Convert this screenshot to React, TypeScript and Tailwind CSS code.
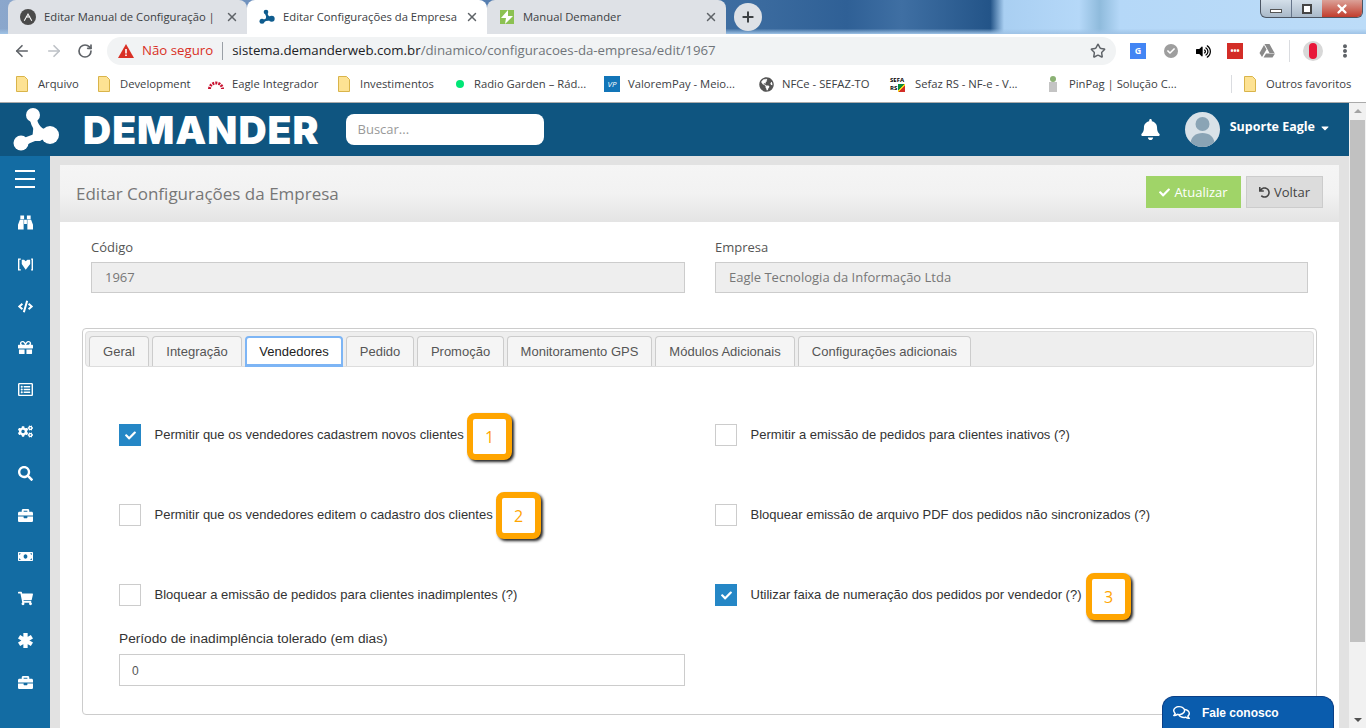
import { useState } from "react";
import {
  FaBell, FaBriefcase, FaCaretDown, FaCheck, FaCode, FaCogs, FaEllipsisV,
  FaGift, FaGlobeAmericas, FaMoneyBill, FaRegComments, FaRegListAlt, FaSearch, FaShoppingCart, FaUndo, FaVolumeUp,
} from "react-icons/fa";
import { ArrowLeft, ArrowRight, Plus, RotateCw, Star, X } from "lucide-react";

const DemanderMark = ({ className, color = "#fff" }: { className: string; color?: string }) => (
  <svg viewBox="0 0 48 46" className={className}>
    <path d="M21 9 C22 20 27 25 38 28 C28 28 20 30 9 37" fill="none" stroke={color} strokeWidth="7" />
    <path d="M22 14 L30 22 L38 28 L28 34 L20 34 Z" fill={color} />
    <circle cx="21" cy="8" r="7" fill={color} />
    <circle cx="38" cy="28" r="9" fill={color} />
    <circle cx="9" cy="36" r="7.5" fill={color} />
  </svg>
);

const Folder = () => (
  <svg viewBox="0 0 12 16" className="h-4 w-3 shrink-0">
    <path d="M.5.5h8l3 3v12H.5z" fill="#fde293" stroke="#d9b44a" />
  </svg>
);

const Tab = ({ title, icon, active, width }: { title: string; icon: React.ReactNode; active?: boolean; width: string }) => (
  <div className={`flex h-[34px] items-center gap-2 rounded-t-lg pl-3 pr-2 ${width} ${active ? "bg-white" : "bg-[#dee1e6]"}`}>
    <span className="flex h-4 w-4 shrink-0 items-center justify-center">{icon}</span>
    <span className="min-w-0 flex-1 whitespace-nowrap text-[11.25px] text-[#3c4043]">{title}</span>
    <X className="h-3.5 w-3.5 shrink-0 text-[#5f6368]" strokeWidth={2.5} />
  </div>
);

const ChromeBar = () => (
  <>
    <div className="flex h-[34px] bg-[linear-gradient(180deg,transparent_84%,#9fc3e6_100%),linear-gradient(90deg,#8ba7cc_0%,#5d83b4_30%,#3a6a9e_56%,#2f6096_62%,#3f6fa3_66%,#235488_72.5%,#a9cff2_73.5%,#b5d8f8_79%,#8fbbdc_80.5%,#b5d8f8_82%,#bcdcf8_100%)] pl-2">
      <Tab
        width="w-[239px]"
        title="Editar Manual de Configuração |"
        icon={
          <span className="flex h-4 w-4 items-center justify-center rounded-full bg-[#4a4a4a]">
            <svg viewBox="0 0 16 16" className="h-3 w-3">
              <path d="M3 13 8 4l5 9M5 8h6" fill="none" stroke="#fff" strokeWidth="1.4" />
            </svg>
          </span>
        }
      />
      <Tab
        width="w-[240px]"
        active
        title="Editar Configurações da Empresa"
        icon={<DemanderMark className="h-4 w-4" color="#0f5c8e" />}
      />
      <Tab
        width="w-[239px]"
        title="Manual Demander"
        icon={
          <svg viewBox="0 0 16 16" className="h-4 w-4">
            <path d="M1 1h14v14H1z" fill="#8cc152" />
            <path d="M9 1 2 9h5l-1 6 8-8H9z" fill="#fff" />
          </svg>
        }
      />
      <div className="ml-2 mt-[3px] flex h-7 w-7 items-center justify-center rounded-full bg-[#dee1e6]">
        <Plus className="h-4 w-4 text-[#3c4043]" strokeWidth={3} />
      </div>
      <div className="ml-auto mr-[3px] flex h-[18px] w-[103px] overflow-hidden rounded-b-md border border-t-0 border-[#4b5563] bg-[linear-gradient(180deg,#d4dfe9,#a9b9c9)]">
        <div className="flex flex-1 items-center justify-center border-r border-[#66758a]">
          <span className="mt-1 h-1 w-3 border border-[#555] bg-white" />
        </div>
        <div className="flex flex-1 items-center justify-center">
          <span className="h-2.5 w-2.5 border-2 border-[#444] bg-white" />
        </div>
        <div className="flex w-[40px] items-center justify-center bg-[linear-gradient(180deg,#dba198,#c23d2d)]">
          <X className="h-3.5 w-3.5 text-white" strokeWidth={4} />
        </div>
      </div>
    </div>
    <div className="flex h-[34px] items-center bg-white pl-[13px]">
      <ArrowLeft className="h-[18px] w-[18px] text-[#5f6368]" strokeWidth={2.2} />
      <ArrowRight className="ml-[14px] h-[18px] w-[18px] text-[#bdc1c6]" strokeWidth={2.2} />
      <RotateCw className="ml-[14px] h-4 w-4 text-[#5f6368]" strokeWidth={2.5} />
      <div className="ml-[14px] flex h-7 w-[1009px] items-center rounded-full bg-[#f1f3f4] pl-[11px] pr-[10px] text-[13.25px]">
        <svg viewBox="0 0 16 14" className="h-3.5 w-4 shrink-0">
          <path d="M8 0l8 14H0z" fill="#d93025" />
          <path d="M7.2 5h1.6v4.5H7.2zM7.2 10.5h1.6V12H7.2z" fill="#fff" />
        </svg>
        <span className="ml-2 text-[#d93025]">Não seguro</span>
        <span className="ml-[9px] mr-[9px] h-[18px] w-px bg-[#9aa0a6]" />
        <span className="text-[#202124]">sistema.demanderweb.com.br</span>
        <span className="text-[#70757a]">/dinamico/configuracoes-da-empresa/edit/1967</span>
        <Star className="ml-auto h-4 w-4 text-[#5f6368]" strokeWidth={2.2} />
      </div>
      <div className="flex items-center pl-[14px]">
        <span className="flex h-4 w-4 items-center justify-center bg-[#4285f4] text-[9px] font-bold text-white">G</span>
        <span className="ml-[18px] flex h-[14px] w-[14px] items-center justify-center rounded-full bg-[#9e9e9e]">
          <FaCheck className="h-2 w-2 text-white" />
        </span>
        <FaVolumeUp className="ml-[18px] h-[15px] w-[15px] text-black" />
        <span className="ml-[16px] flex h-4 w-4 items-center justify-center bg-[#d32d27] text-[8px] font-bold leading-none text-white">
          •••
        </span>
        <svg viewBox="0 0 16 14" className="ml-[16px] h-3.5 w-4">
          <path d="M5.5 0h5l5 9h-5zM5 1l2.5 4.5L3 13 .5 9zM4.5 13.5 7 9.5h9l-2.5 4z" fill="#8a8a8a" />
        </svg>
        <span className="ml-[14px] h-[22px] w-px bg-[#dadce0]" />
        <span className="ml-[13px] flex h-5 w-5 items-center justify-center rounded-full bg-[#d8d8d8]">
          <span className="h-4 w-2 rounded-full bg-[#e8173a]" />
        </span>
        <FaEllipsisV className="ml-[15px] h-3.5 w-3.5 text-[#5f6368]" />
      </div>
    </div>
    <div className="flex h-[35px] items-center border-b border-[#aaa] bg-white pb-[2px] text-[11.25px] text-[#3c4043]">
      <div className="flex w-[98px] items-center gap-[10px] pl-4"><Folder />Arquivo</div>
      <div className="flex w-[110px] items-center gap-[10px]"><Folder />Development</div>
      <div className="flex w-[130px] items-center gap-2">
        <svg viewBox="0 0 16 12" className="h-3 w-4 shrink-0">
          <path d="M1.5 11C2 3 14 3 14.5 11" fill="none" stroke="#c8102e" strokeWidth="3" strokeDasharray="2 1" />
        </svg>
        Eagle Integrador
      </div>
      <div className="flex w-[120px] items-center gap-[10px]"><Folder />Investimentos</div>
      <div className="-ml-0.5 flex w-[148px] items-center gap-[10px]">
        <span className="h-2 w-2 shrink-0 rounded-full bg-[#00e676]" />
        Radio Garden – Rád...
      </div>
      <div className="flex w-[155px] items-center gap-2">
        <span className="flex h-4 w-4 shrink-0 items-center justify-center bg-[#1275b8] text-[8px] italic text-white">VP</span>
        ValoremPay - Meio...
      </div>
      <div className="flex w-[131px] items-center gap-2">
        <FaGlobeAmericas className="h-[15px] w-[15px] shrink-0 text-[#555]" />
        NFCe - SEFAZ-TO
      </div>
      <div className="flex w-[155px] items-center gap-[9px]">
        <span className="flex h-4 w-4 shrink-0 flex-col bg-white text-[6px] font-bold leading-[8px] text-black">
          <span>SEFA</span>
          <span className="flex">RS<span className="ml-px h-2 w-[7px] bg-[linear-gradient(135deg,#0a8a3a_45%,#f4d21f_45%,#f4d21f_60%,#d32d27_60%)]" /></span>
        </span>
        Sefaz RS - NF-e - V...
      </div>
      <div className="flex w-[186px] items-center gap-2">
        <span className="flex h-4 w-4 shrink-0 flex-col items-center">
          <span className="h-1.5 w-1.5 rounded-full bg-[#8bb174]" />
          <span className="h-2.5 w-2 bg-[#c4c4c4]" />
        </span>
        PinPag | Solução C...
      </div>
      <span className="h-[18px] w-px bg-[#dadce0]" />
      <div className="ml-3 flex items-center gap-[10px]"><Folder />Outros favoritos</div>
    </div>
  </>
);

const Binoculars = ({ className }: { className: string }) => (
  <svg viewBox="0 0 16 15" className={className} fill="currentColor">
    <path d="M2.5 0h4v4h-4zM9.5 0h4v4h-4zM6.5 4.5h3v4.5h-3zM2 4.5h4V15H0v-5zM10 4.5h4l2 5.500V15h-6z" />
  </svg>
);

const BracketHeart = ({ className }: { className: string }) => (
  <svg viewBox="0 0 16 15" className={className} fill="currentColor">
    <path d="M0 1h3v1.500H1.500v10H3V14H0zM16 1h-2v1.500h.5v10H14V14h2z" />
    <path d="M8.200 13 4 7V2.500h2.500l1.700 1.500 1.800-1.500H13V7z" />
  </svg>
);

const ThickAsterisk = ({ className }: { className: string }) => (
  <svg viewBox="0 0 14 14" className={className} fill="none" stroke="currentColor" strokeWidth="4">
    <path d="M7 0v14M1 3.500l12 7M13 3.500l-12 7" />
  </svg>
);

const nav = [
  Binoculars, BracketHeart, FaCode, FaGift, FaRegListAlt, FaCogs, FaSearch, FaBriefcase, FaMoneyBill, FaShoppingCart, ThickAsterisk, FaBriefcase,
];

const Sidebar = () => (
  <aside className="flex w-[50px] shrink-0 flex-col items-center bg-[#136ca3]">
    <div className="mt-[14px] flex w-5 flex-col gap-[6px]">
      <span className="h-0.5 bg-white" />
      <span className="h-0.5 bg-white" />
      <span className="h-0.5 bg-white" />
    </div>
    <div className="mt-[27px] flex flex-col items-center gap-[26.8px]">
      {nav.map((Icon, i) => (
        <Icon key={i} className="h-[15px] w-[15px] text-white" />
      ))}
    </div>
  </aside>
);

const tabs = [
  { label: "Geral", width: "w-[60px]" },
  { label: "Integração", width: "w-[90px]" },
  { label: "Vendedores", width: "w-[98px]" },
  { label: "Pedido", width: "w-[68px]" },
  { label: "Promoção", width: "w-[87px]" },
  { label: "Monitoramento GPS", width: "w-[145px]" },
  { label: "Módulos Adicionais", width: "w-[140px]" },
  { label: "Configurações adicionais", width: "w-[173px]" },
];

const Check = ({ label, on, badge }: { label: string; on?: boolean; badge?: { text: string; pos: string } }) => {
  const [checked, setChecked] = useState(!!on);
  return (
    <div className="relative flex h-[22px] items-center">
      <button
        type="button"
        onClick={() => setChecked(!checked)}
        className={`flex h-[22px] w-[22px] shrink-0 items-center justify-center border ${checked ? "border-[#2587c6] bg-[#2587c6]" : "border-[#ccc] bg-white"}`}
      >
        {checked && <FaCheck className="h-[11px] w-[11px] text-white" />}
      </button>
      <span className="ml-[13.5px] whitespace-nowrap text-[13px] text-[#333]">{label}</span>
      {badge && (
        <span className={`absolute flex h-[47px] w-[45px] items-center justify-center rounded-lg border-[6px] border-[#ffa500] bg-white font-['Open_Sans',sans-serif] text-base text-[#ffa500] shadow-[2px_2px_3px_#222] ${badge.pos}`}>
          {badge.text}
        </span>
      )}
    </div>
  );
};

export default function App() {
  return (
    <div className="flex h-[728px] w-[1366px] flex-col overflow-hidden bg-white font-['Open_Sans',sans-serif]">
      <ChromeBar />
      <div className="flex min-h-0 flex-1">
        <div className="flex w-[1349px] flex-col">
          <header className="flex h-[53px] shrink-0 items-center bg-[#0f5580] pl-3">
            <DemanderMark className="h-[46px] w-[48px]" />
            <span className="ml-[23px] font-['Inter',sans-serif] text-[39px] font-black leading-none tracking-[1px] text-white">DEMANDER</span>
            <div className="ml-[26px] flex h-[31px] w-[198px] items-center rounded-lg bg-white pl-3 text-[13px] text-[#999]">Buscar...</div>
            <FaBell className="ml-auto h-[21px] w-[21px] text-white" />
            <span className="ml-[24px] flex h-[35px] w-[35px] items-end justify-center overflow-hidden rounded-full bg-[#d9e2e8]">
              <svg viewBox="0 0 35 35" className="h-[35px] w-[35px]">
                <circle cx="17.5" cy="12" r="7" fill="#8aa4b5" />
                <path d="M5 35c0-11 6-14 12.5-14S30 24 30 35z" fill="#8aa4b5" />
              </svg>
            </span>
            <span className="ml-[10px] -mt-1 text-[12.5px] font-bold text-white">Suporte Eagle</span>
            <FaCaretDown className="ml-[4px] mr-[18px] -mt-1 h-3 w-3 text-white" />
          </header>
          <div className="flex min-h-0 flex-1">
            <Sidebar />
            <main className="min-w-0 flex-1 bg-[#e2e2e2] pl-[10px] pr-[10px] pt-[9px]">
              <div className="h-[600px] bg-white">
                <div className="flex h-[57px] items-start bg-[linear-gradient(180deg,#f5f5f5_0%,#f2f2f2_50%,#e4e4e4_100%)] pl-4 pr-4 pt-[11px]">
                  <h1 className="mt-[5px] text-[17px] text-[#777]">Editar Configurações da Empresa</h1>
                  <button type="button" className="ml-auto flex h-8 w-[95px] items-center justify-center gap-1 bg-[#a0d468] pt-px text-[13px] text-white">
                    <FaCheck className="h-[11px] w-[11px]" /> Atualizar
                  </button>
                  <button type="button" className="ml-[5px] flex h-8 w-[77px] items-center justify-center gap-1 border border-[#ccc] bg-[#dcdcdc] pt-px text-[13px] text-[#444]">
                    <FaUndo className="h-[11px] w-[11px]" /> Voltar
                  </button>
                </div>
                <div className="px-[22px] pt-[17px]">
                  <div className="grid grid-cols-[594px_593px] gap-x-[30px] pl-[9px]">
                    <div>
                      <label className="block text-[13px] leading-4 text-[#555]">Código</label>
                      <div className="mt-[7px] flex h-[31px] items-center border border-[#ccc] bg-[#eee] pl-[13px] text-[13px] text-[#777]">1967</div>
                    </div>
                    <div>
                      <label className="block text-[13px] leading-4 text-[#555]">Empresa</label>
                      <div className="mt-[7px] flex h-[31px] items-center border border-[#ccc] bg-[#eee] pl-[13px] text-[13px] text-[#777]">Eagle Tecnologia da Informação Ltda</div>
                    </div>
                  </div>
                  <section className="mt-[35px] h-[387px] w-[1235px] rounded-sm border border-[#ccc] p-[2px] font-['Liberation_Sans',sans-serif]">
                    <div className="flex h-[36px] items-end gap-[3px] rounded-sm border border-[#ddd] bg-[#eee] pl-[3px]">
                      {tabs.map((t) =>
                        t.label === "Vendedores" ? (
                          <div key={t.label} className={`-mb-px flex h-[31px] items-center justify-center rounded-t-sm border-2 border-b-[3px] border-[#7db5f5] bg-white pt-0.5 text-[13px] text-[#222] ${t.width}`}>
                            {t.label}
                          </div>
                        ) : (
                          <div key={t.label} className={`flex h-[30px] items-center justify-center rounded-t-sm border border-b-0 border-[#ccc] bg-[#f5f5f5] text-[13px] text-[#555] ${t.width}`}>
                            {t.label}
                          </div>
                        ),
                      )}
                    </div>
                    <div className="grid grid-cols-[596px_1fr] gap-y-[58px] pl-[34px] pt-[57px]">
                      <Check label="Permitir que os vendedores cadastrem novos clientes" on badge={{ text: "1", pos: "left-[348px] top-[-11px]" }} />
                      <Check label="Permitir a emissão de pedidos para clientes inativos (?)" />
                      <Check label="Permitir que os vendedores editem o cadastro dos clientes" badge={{ text: "2", pos: "left-[377px] top-[-12px]" }} />
                      <Check label="Bloquear emissão de arquivo PDF dos pedidos não sincronizados (?)" />
                      <Check label="Bloquear a emissão de pedidos para clientes inadimplentes (?)" />
                      <Check label="Utilizar faixa de numeração dos pedidos por vendedor (?)" on badge={{ text: "3", pos: "left-[371px] top-[-11px]" }} />
                    </div>
                    <div className="pl-[34px] pt-[25px]">
                      <label className="block text-[13.7px] leading-4 text-[#333]">Período de inadimplência tolerado (em dias)</label>
                      <div className="mt-[7px] flex h-8 w-[566px] items-center border border-[#ccc] bg-white pl-[12px] pt-px text-xs text-[#555]">0</div>
                    </div>
                  </section>
                </div>
              </div>
            </main>
          </div>
        </div>
        <div className="flex w-[17px] flex-col items-center bg-[#f1f1f1]">
          <span className="mt-[6px] h-0 w-0 border-x-4 border-b-4 border-x-transparent border-b-[#a3a3a3]" />
          <span className="mt-[7px] h-[522px] w-[15px] bg-[#c1c1c1]" />
          <span className="mt-auto mb-[6px] h-0 w-0 border-x-4 border-t-4 border-x-transparent border-t-[#505050]" />
        </div>
      </div>
      <div className="absolute left-[1162px] top-[696px] flex h-8 w-[172px] items-center rounded-t-xl border border-b-0 border-[#0a3f86] bg-[#0a5cad] pl-[10px] font-['Liberation_Sans',sans-serif] text-xs font-bold text-white">
        <FaRegComments className="h-[17px] w-[17px]" />
        <span className="ml-[12px]">Fale conosco</span>
      </div>
    </div>
  );
}
